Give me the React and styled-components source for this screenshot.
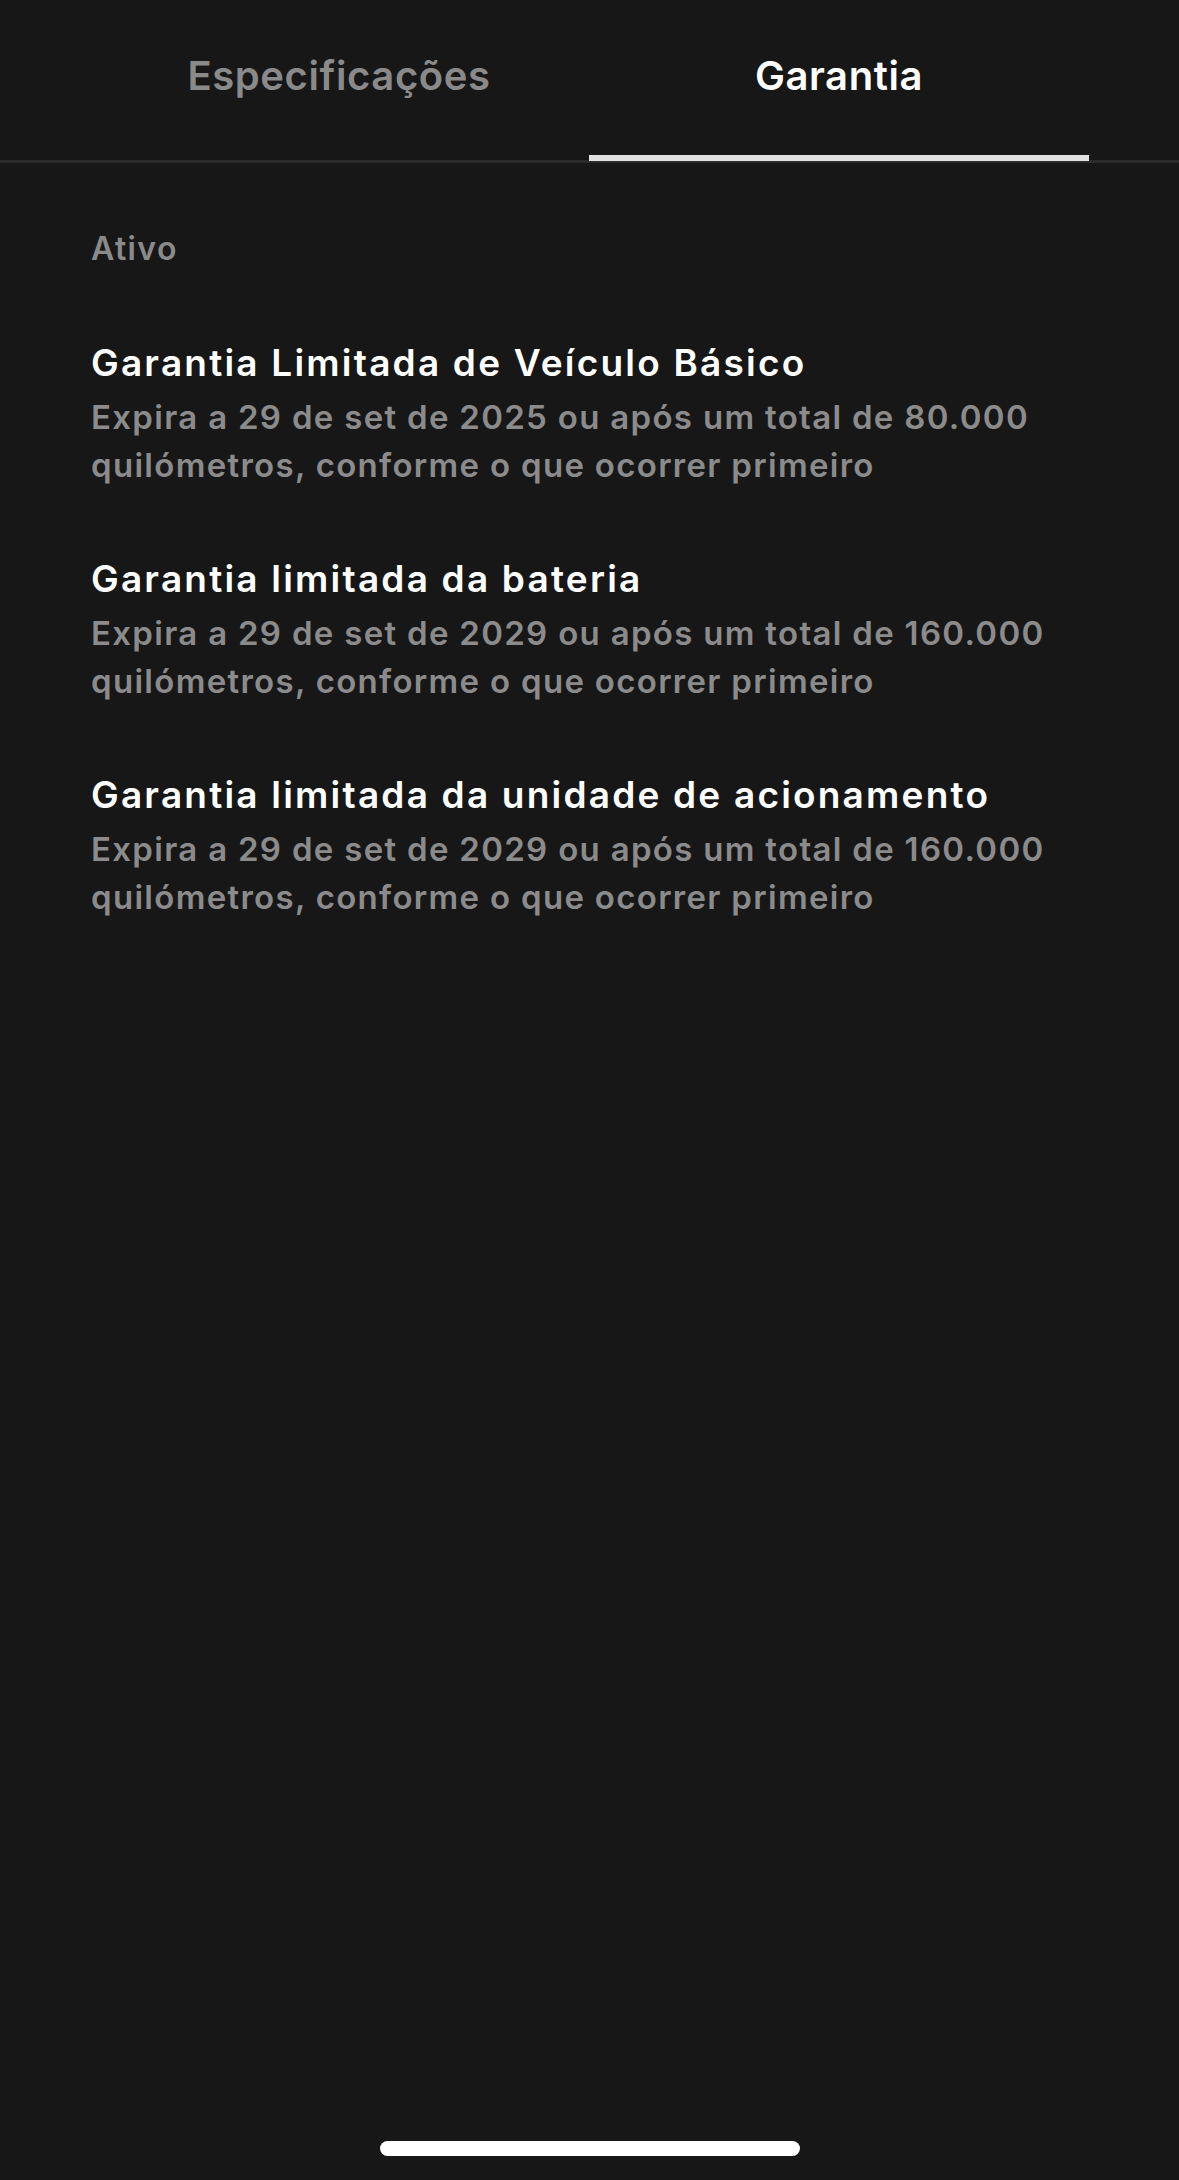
import styled, { createGlobalStyle } from 'styled-components';

const GlobalStyle = createGlobalStyle`
  html, body {
    margin: 0;
    padding: 0;
    background: #171717;
  }
  body {
    font-family: Inter, "Noto Sans", sans-serif;
    -webkit-font-smoothing: antialiased;
  }
`;

const warranties = [
  {
    title: 'Garantia Limitada de Veículo Básico',
    detail:
      'Expira a 29 de set de 2025 ou após um total de 80.000 quilómetros, conforme o que ocorrer primeiro',
  },
  {
    title: 'Garantia limitada da bateria',
    detail:
      'Expira a 29 de set de 2029 ou após um total de 160.000 quilómetros, conforme o que ocorrer primeiro',
  },
  {
    title: 'Garantia limitada da unidade de acionamento',
    detail:
      'Expira a 29 de set de 2029 ou após um total de 160.000 quilómetros, conforme o que ocorrer primeiro',
  },
];

export default function App() {
  return (
    <>
      <GlobalStyle />
      <Screen>
        <TabBar>
          <Tab>Especificações</Tab>
          <Tab $active>Garantia</Tab>
        </TabBar>
        <Content>
          <SectionLabel>Ativo</SectionLabel>
          {warranties.map((w) => (
            <Item key={w.title}>
              <ItemTitle>{w.title}</ItemTitle>
              <ItemDetail>{w.detail}</ItemDetail>
            </Item>
          ))}
        </Content>
        <HomeIndicator />
      </Screen>
    </>
  );
}

const Screen = styled.div`
  display: flex;
  flex-direction: column;
  width: 1179px;
  height: 2180px;
  background: #171717;
  overflow: hidden;
`;

const TabBar = styled.div`
  display: flex;
  padding: 0 90px 0 89px;
  border-bottom: 3px solid #2b2b2b;
`;

const Tab = styled.div`
  position: relative;
  flex: 1;
  box-sizing: border-box;
  height: 160px;
  padding-top: 52px;
  text-align: center;
  font-size: 40px;
  line-height: 48px;
  font-weight: 600;
  letter-spacing: 0.6px;
  color: ${(p) => (p.$active ? '#ffffff' : '#8a8a8a')};

  &::after {
    content: '';
    display: ${(p) => (p.$active ? 'block' : 'none')};
    position: absolute;
    left: 0;
    right: 0;
    bottom: -1px;
    height: 6px;
    background: #e2e2e2;
  }
`;

const Content = styled.div`
  display: flex;
  flex-direction: column;
  gap: 66px;
  padding: 62px 91px 0;
  flex: 1;
`;

const SectionLabel = styled.div`
  font-size: 32px;
  line-height: 48px;
  font-weight: 600;
  letter-spacing: 1.4px;
  color: #8a8a8a;
`;

const Item = styled.div`
  display: flex;
  flex-direction: column;
  gap: 6px;
`;

const ItemTitle = styled.div`
  font-size: 37px;
  line-height: 48px;
  font-weight: 600;
  color: #ffffff;
  letter-spacing: 2.2px;
`;

const ItemDetail = styled.div`
  font-size: 33px;
  line-height: 48px;
  font-weight: 600;
  color: #8b8b8b;
  letter-spacing: 1.3px;
  max-width: 1000px;
`;

const HomeIndicator = styled.div`
  align-self: center;
  width: 420px;
  height: 15px;
  border-radius: 8px;
  background: #ffffff;
  margin-bottom: 24px;
`;
